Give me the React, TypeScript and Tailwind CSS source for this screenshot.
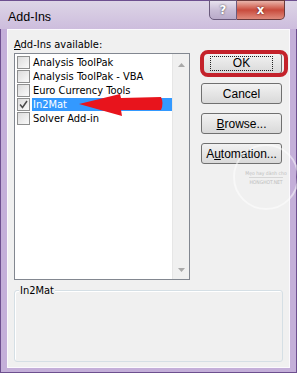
import React from 'react'

const ui = { fontFamily: '"DejaVu Sans Condensed", "Liberation Sans", sans-serif' }

type AddIn = { name: string; checked: boolean; selected: boolean }

const addIns: AddIn[] = [
    { name: 'Analysis ToolPak', checked: false, selected: false },
    { name: 'Analysis ToolPak - VBA', checked: false, selected: false },
    { name: 'Euro Currency Tools', checked: false, selected: false },
    { name: 'In2Mat', checked: true, selected: true },
    { name: 'Solver Add-in', checked: false, selected: false },
]

const CheckBox = ({ checked }: { checked: boolean }) => {
    return (
        <span className="w-[13px] h-[13px] shrink-0 border border-[#8e8f8f] bg-gradient-to-br from-[#dcdcdc] to-[#fafafa] flex items-center justify-center">
            {checked && (
                <svg width="9" height="9" viewBox="0 0 9 9">
                    <path d="M1 4.5 L3.5 7.5 L8 1" stroke="#4a4a4a" strokeWidth="1.5" fill="none" />
                </svg>
            )}
        </span>
    )
}

const Button = ({ children }: { children: React.ReactNode }) => {
    return (
        <div
            className="h-[21px] w-[81px] rounded-[3px] border border-[#707070] bg-gradient-to-b from-[#f2f2f2] to-[#d9d9d9] flex items-center justify-center text-[12px] text-black"
            style={{ fontFamily: '"Liberation Sans", sans-serif' }}
        >
            {children}
        </div>
    )
}

const TitleButtons = () => {
    return (
        <div className="flex -mt-px mr-[4px]">
            <div className="w-[28px] h-[20px] rounded-bl-[5px] border border-[#6a5a7c] bg-gradient-to-b from-[#e8e2ee] via-[#c9bdd6] to-[#b9aac9] flex items-center justify-center text-white text-[13px] font-bold [text-shadow:0_0_2px_#333]">
                ?
            </div>
            <div className="w-[48px] h-[20px] rounded-br-[5px] border border-l-0 border-[#6a3a3a] bg-gradient-to-b from-[#e8b4ab] via-[#c84a3c] to-[#df8a7c] flex items-center justify-center text-white text-[13px] font-bold [text-shadow:0_0_2px_#3a1010]">
                x
            </div>
        </div>
    )
}

const ListBox = () => {
    return (
        <div className="relative w-[176px] h-[227px] border border-[#828790] bg-white flex">
            <ul className="flex-1 pt-[1px] pl-[2px]">
                {addIns.map((item) => (
                    <li key={item.name} className="h-[14px] flex items-center">
                        <CheckBox checked={item.checked} />
                        <span
                            className={`ml-[2px] flex-1 h-[13px] pl-[1px] leading-[13px] text-[11px] ${item.selected ? 'bg-[#3399ff] text-white' : 'text-black'}`}
                        >
                            {item.name}
                        </span>
                    </li>
                ))}
            </ul>
            <div className="w-[17px] bg-[#f0f0f0] border-l border-[#e6e6e6] flex flex-col items-center justify-between pt-[9px] pb-[7px]">
                <svg width="7" height="4" viewBox="0 0 7 4"><path d="M0 4 L3.5 0 L7 4 Z" fill="#a9a9a9" /></svg>
                <svg width="7" height="4" viewBox="0 0 7 4"><path d="M0 0 L3.5 4 L7 0 Z" fill="#a9a9a9" /></svg>
            </div>
            {/* red annotation arrow */}
            <svg className="absolute left-0 top-0" width="176" height="80" viewBox="0 0 176 80">
                <path d="M64 50 L105 40 L106 44 L146 43 Q149 49 146 56 L106 56 L107 62 Z" fill="#e8141c" />
            </svg>
        </div>
    )
}

const App = () => {
    return (
        <div className="w-[297px] h-[373px] border border-[#6d4f8f] bg-[#c4afd9] flex flex-col" style={ui}>
            <div className="h-[28px] -mx-px px-[8px] flex items-start justify-between bg-gradient-to-b from-[#ddd5e6] to-[#cdbddd]">
                <span className="mt-[7px] text-[12.5px] text-black" style={{ fontFamily: '"Liberation Sans", sans-serif' }}>Add-Ins</span>
                <TitleButtons />
            </div>
            <div className="flex-1 mx-[6px] mb-[4px] border border-[#fbf9fd] bg-[#f0f0f0] relative px-[6px] pt-[8px]">
                <div className="h-[13px] leading-[13px] text-[11px] text-black">
                    <u>A</u>dd-Ins available:
                </div>
                <div className="mt-[2px] flex items-start">
                    <ListBox />
                    <div className="ml-[11px] flex flex-col gap-[9px]">
                        <div className="relative">
                            <Button>
                                <span className="px-[22px] border border-dotted border-[#222] leading-[13px]">OK</span>
                            </Button>
                            <div className="absolute -left-[1px] -top-[3px] w-[88px] h-[27px] rounded-[8px] border-[4px] border-[#c4222b]" />
                        </div>
                        <Button>Cancel</Button>
                        <Button><span><u>B</u>rowse...</span></Button>
                        <Button><span>A<u>u</u>tomation...</span></Button>
                    </div>
                </div>
                <div className="relative mt-[10px] w-[269px] h-[72px] rounded-[3px] border border-[#d5dfe5] shadow-[inset_1px_1px_0_#ffffff]">
                    <span className="absolute left-[4px] -top-[7px] bg-[#f0f0f0] px-px leading-[13px] text-[11px] text-black">In2Mat</span>
                </div>
                {/* faint watermark */}
                <div className="absolute left-[225px] top-[114px] w-[66px] h-[66px] rounded-full border-2 border-white/50 flex flex-col items-center justify-center text-[5px] text-[#bdbdbd] leading-[8px]">
                    <span>Mẹo hay dành cho</span>
                    <span className="border-t border-[#d6d6d6]">HONGHOT.NET</span>
                </div>
            </div>
        </div>
    )
}

export default App
